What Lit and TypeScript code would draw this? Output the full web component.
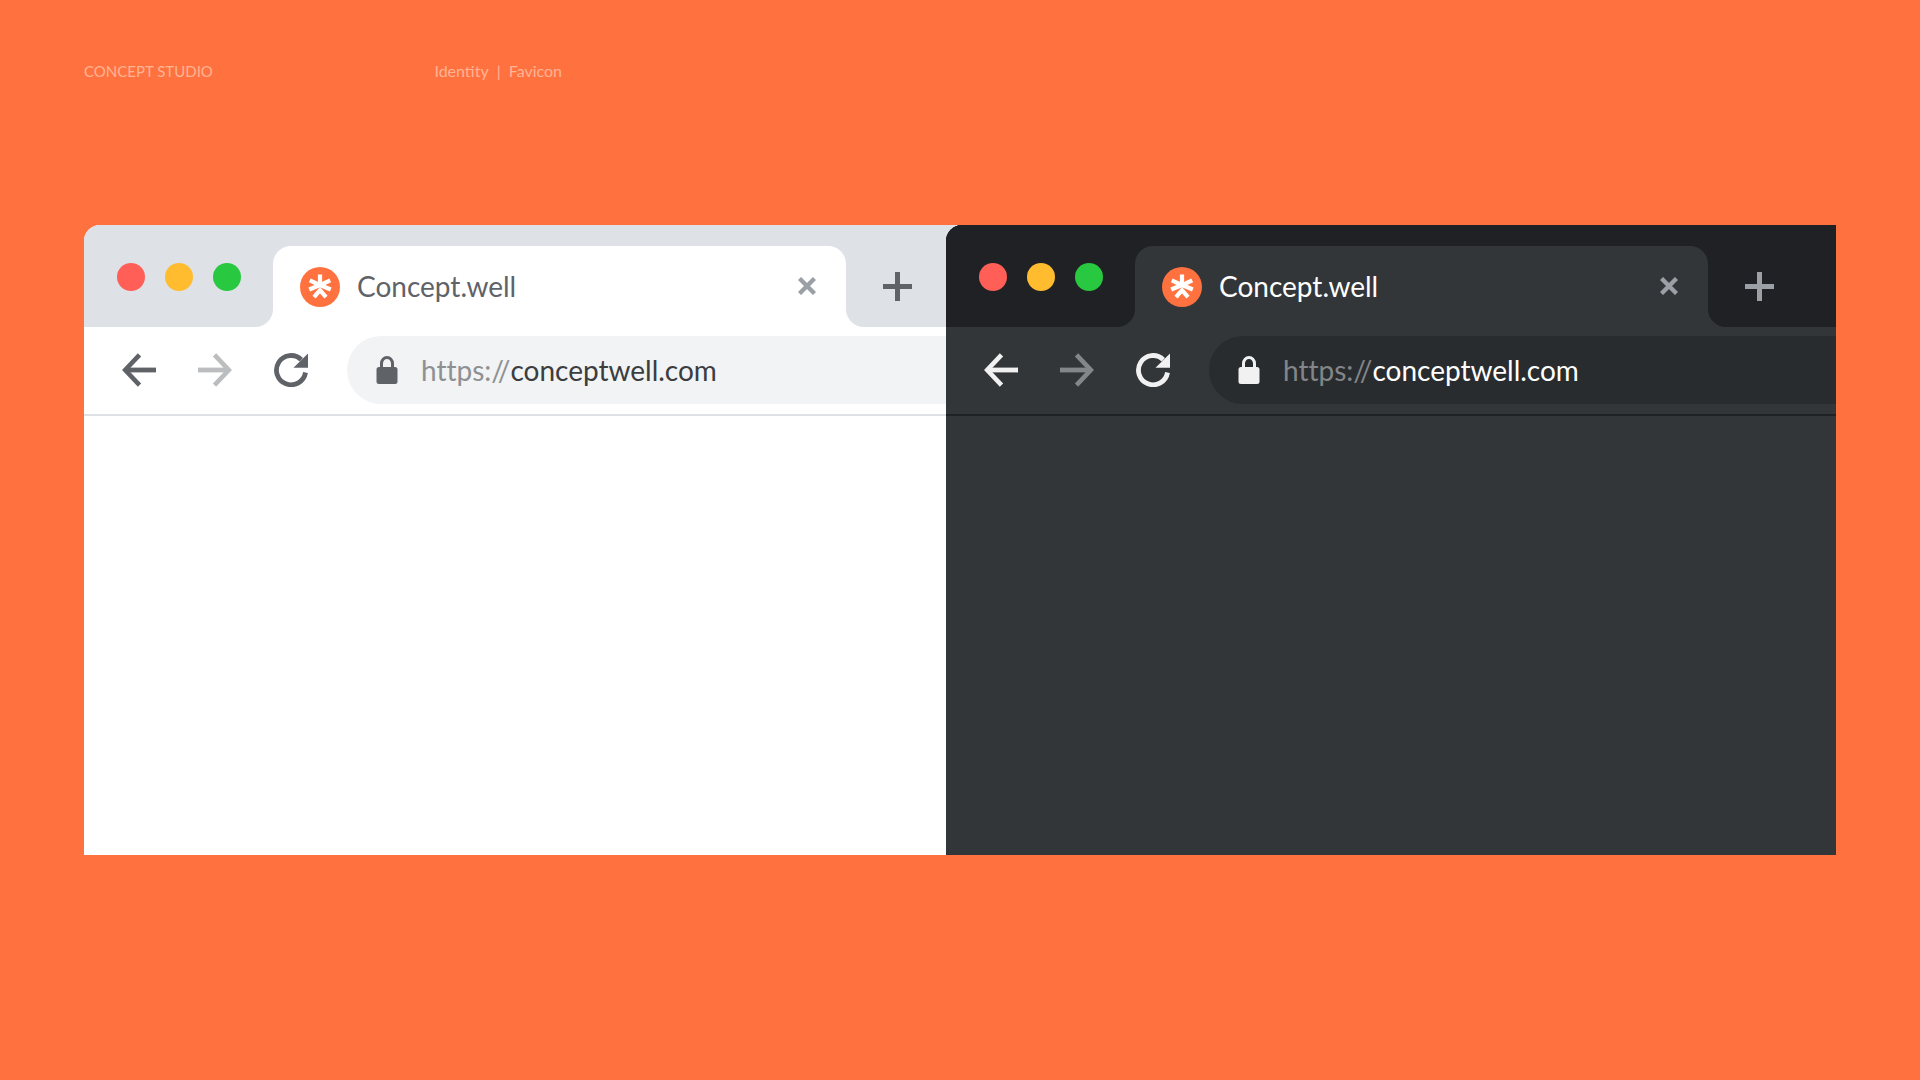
import { LitElement, html, css, svg } from "lit";
import { customElement, property } from "lit/decorators.js";

const favicon = svg`
  <circle cx="20" cy="20" r="20" fill="#ff723f" />
  <g stroke="#fff" stroke-width="4.200" fill="none">
    <path d="M20 7.500V19" />
    <path d="M9.800 13.300L20 18.200L30.200 13.300" />
    <path d="M9.200 22.500L20 18L30.800 22.500" />
    <path d="M14 30.200L20 23.200L26 30.200" />
  </g>
`;

@customElement("browser-window")
export class BrowserWindow extends LitElement {
  @property() theme = "light";
  @property() heading = "";
  @property() scheme = "https://";
  @property() host = "";

  static styles = css`
    :host {
      --frame: #dee1e6;
      --surface: #ffffff;
      --field: #f1f3f4;
      --icon: #5f6368;
      --icon-off: #bbbdbf;
      --title: #5f6368;
      --close: #9aa0a6;
      --add: #5f6368;
      --scheme: #8e9092;
      --site: #3c3d3f;
      display: flex;
      flex-direction: column;
      overflow: hidden;
      border-top-left-radius: 16px;
      background: var(--surface);
      font-family: Lato, "Open Sans", sans-serif;
      font-variant-ligatures: none;
    }
    :host([theme="dark"]) {
      --frame: #202124;
      --surface: #323639;
      --field: #282c2f;
      --icon: #f1f1f1;
      --icon-off: #838789;
      --title: #ffffff;
      --add: #9aa0a6;
      --scheme: #838688;
      --site: #ffffff;
    }
    button {
      display: flex;
      padding: 0;
      border: 0;
      background: none;
      color: inherit;
      cursor: pointer;
    }
    svg {
      display: block;
    }
    .strip {
      display: flex;
      height: 102px;
      background: linear-gradient(var(--frame) 50%, var(--surface) 50%);
    }
    .lights {
      display: flex;
      gap: 20px;
      box-sizing: border-box;
      width: 189px;
      padding: 38px 0 0 33px;
      border-bottom-right-radius: 18px;
      background: var(--frame);
    }
    .light {
      width: 28px;
      height: 28px;
      border-radius: 50%;
    }
    .red {
      background: #ff5f57;
    }
    .amber {
      background: #febc2e;
    }
    .green {
      background: #28c840;
    }
    .tab {
      display: flex;
      flex: 1;
      align-items: center;
      box-sizing: border-box;
      margin-top: 21px;
      padding: 0 30px 0 27px;
      border-radius: 18px 18px 0 0;
      background: var(--surface);
    }
    .title {
      flex: 1;
      padding: 0 0 2px 17px;
      color: var(--title);
      font-size: 28px;
      line-height: 40px;
    }
    .close {
      padding-bottom: 2px;
      color: var(--close);
    }
    .rest {
      display: flex;
      align-items: center;
      box-sizing: border-box;
      width: 128px;
      padding: 20px 0 0 37px;
      border-bottom-left-radius: 18px;
      background: var(--frame);
      color: var(--add);
    }
    .toolbar {
      display: flex;
      align-items: center;
      padding: 9px 0 10px 38px;
      border-bottom: 2px solid var(--frame);
    }
    .nav {
      display: flex;
      gap: 42px;
      padding-right: 39px;
      color: var(--icon);
    }
    .off {
      color: var(--icon-off);
    }
    .address {
      display: flex;
      flex: 1;
      align-items: center;
      height: 68px;
      padding-left: 29px;
      border-radius: 34px 0 0 34px;
      background: var(--field);
      color: var(--icon);
      font-size: 28px;
    }
    .scheme {
      padding-left: 23px;
      color: var(--scheme);
    }
    .site {
      flex: 1;
      min-width: 0;
      padding: 0;
      border: 0;
      outline: 0;
      background: none;
      color: var(--site);
      font: inherit;
      font-variant-ligatures: none;
    }
  `;

  render() {
    return html`
      <div class="strip">
        <div class="lights">
          <button class="light red" aria-label="Close window"></button>
          <button class="light amber" aria-label="Minimise window"></button>
          <button class="light green" aria-label="Zoom window"></button>
        </div>
        <div class="tab">
          <svg width="40" height="40" viewBox="0 0 40 40" aria-hidden="true">${favicon}</svg>
          <span class="title">${this.heading}</span>
          <button class="close" aria-label="Close tab">
            <svg width="18" height="18" viewBox="0 0 18 18">
              <path d="M1.500 1.500L16.500 16.500M16.500 1.500L1.500 16.500" stroke="currentColor" stroke-width="4.400" />
            </svg>
          </button>
        </div>
        <div class="rest">
          <button aria-label="New tab">
            <svg width="29" height="29" viewBox="0 0 29 29">
              <path d="M14.500 0V29M0 14.500H29" stroke="currentColor" stroke-width="5" />
            </svg>
          </button>
        </div>
      </div>
      <div class="toolbar">
        <div class="nav">
          <button aria-label="Back">
            <svg width="34" height="34" viewBox="0 0 34 34" fill="none" stroke="currentColor">
              <path d="M34 17H4" stroke-width="4.800" />
              <path d="M17.500 1.800L3.200 17L17.500 32.200" stroke-width="4.600" />
            </svg>
          </button>
          <button class="off" aria-label="Forward">
            <svg width="34" height="34" viewBox="0 0 34 34" fill="none" stroke="currentColor">
              <path d="M0 17H30" stroke-width="4.800" />
              <path d="M16.500 1.800L30.800 17L16.500 32.200" stroke-width="4.600" />
            </svg>
          </button>
          <button aria-label="Reload">
            <svg width="34" height="34" viewBox="0 0 34 34">
              <path d="M31.500 19.500A14.600 14.600 0 1 1 27.300 6.700" fill="none" stroke="currentColor" stroke-width="4.800" />
              <path d="M34 0.500V14.700H19.500Z" fill="currentColor" />
            </svg>
          </button>
        </div>
        <label class="address">
          <svg width="22" height="28" viewBox="0 0 22 28" aria-hidden="true">
            <rect x="0.500" y="11" width="21" height="17" rx="2.500" fill="currentColor" />
            <path d="M5.500 12V7.500a5.500 6 0 0 1 11 0V12" fill="none" stroke="currentColor" stroke-width="3" />
          </svg>
          <span class="scheme">${this.scheme}</span>
          <input class="site" type="text" aria-label="Address" .value=${this.host} />
        </label>
      </div>
    `;
  }
}

@customElement("app-root")
export class AppRoot extends LitElement {
  static styles = css`
    :host {
      display: flex;
      flex-direction: column;
      box-sizing: border-box;
      min-height: 100vh;
      padding: 59px 84px 225px;
      background: #ff723f;
    }
    .masthead {
      display: grid;
      grid-template-columns: 1fr 4fr;
      height: 166px;
      color: #ffb495;
      font-family: Lato, sans-serif;
      font-size: 15px;
      line-height: 24px;
    }
    .crumbs {
      display: flex;
      gap: 8px;
      font-size: 16px;
    }
    .windows {
      display: flex;
      flex: 1;
    }
    .window {
      flex: 1;
    }
    .front {
      margin-left: -28px;
      z-index: 1;
    }
  `;

  render() {
    return html`
      <header class="masthead">
        <span>CONCEPT STUDIO</span>
        <span class="crumbs"><span>Identity</span><span>|</span><span>Favicon</span></span>
      </header>
      <main class="windows">
        <browser-window class="window" theme="light" heading="Concept.well" host="conceptwell.com"></browser-window>
        <browser-window class="window front" theme="dark" heading="Concept.well" host="conceptwell.com"></browser-window>
      </main>
    `;
  }
}
